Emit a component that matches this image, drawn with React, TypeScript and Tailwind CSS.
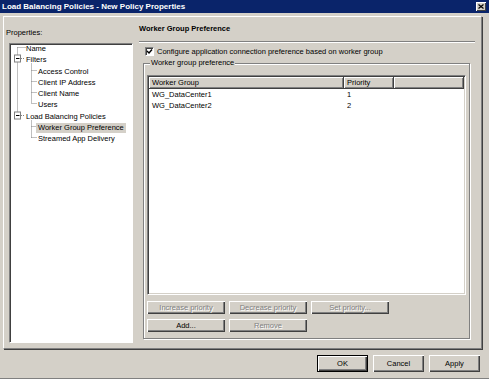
import React from "react";

const font = { fontFamily: '"Liberation Sans", Arial, sans-serif' };

function Btn({ label, disabled, w = "w-[78px]", h = "h-[13px]", def }: { label: string; disabled?: boolean; w?: string; h?: string; def?: boolean }) {
  return (
    <div
      className={`${w} ${h} flex items-center justify-center bg-[#d4d0c8] ${
        def
          ? "border border-[#000] shadow-[inset_1px_1px_0_#fff,inset_-1px_-1px_0_#404040,inset_-2px_-2px_0_#808080]"
          : "shadow-[inset_1px_1px_0_#fff,inset_-1px_-1px_0_#404040,inset_-2px_-2px_0_#808080]"
      } text-[7.5px] leading-none ${disabled ? "text-[#808080] [text-shadow:1px_1px_0_#fff]" : "text-black"}`}
    >
      {label}
    </div>
  );
}

function TreeLines() {
  const c = (k: number) => 3.5 + Math.round(11.25 * k);
  const dot = { stroke: "#808080", strokeWidth: 1, strokeDasharray: "1 1", fill: "none" } as const;
  const box = (k: number) => (
    <g key={"b" + k}>
      <rect x={4.5} y={c(k) - 3.5} width={6} height={7} fill="#fff" stroke="#808080" strokeWidth={1} />
      <line x1={6} y1={c(k)} x2={9.5} y2={c(k)} stroke="#000" strokeWidth={1} />
    </g>
  );
  return (
    <svg className="absolute left-0 top-0" width={120} height={120}>
      <line x1={7.5} y1={c(0)} x2={7.5} y2={c(6)} {...dot} />
      <line x1={7.5} y1={c(0)} x2={16} y2={c(0)} {...dot} />
      <line x1={11} y1={c(1)} x2={15} y2={c(1)} {...dot} />
      <line x1={11} y1={c(6)} x2={15} y2={c(6)} {...dot} />
      <line x1={21.5} y1={c(1) + 5} x2={21.5} y2={c(5)} {...dot} />
      {[2, 3, 4, 5].map((k) => (
        <line key={k} x1={21.5} y1={c(k)} x2={27} y2={c(k)} {...dot} />
      ))}
      <line x1={21.5} y1={c(6) + 5} x2={21.5} y2={c(8)} {...dot} />
      {[7, 8].map((k) => (
        <line key={"l" + k} x1={21.5} y1={c(k)} x2={27} y2={c(k)} {...dot} />
      ))}
      {box(1)}
      {box(6)}
    </svg>
  );
}

export default function App() {
  const tree: { t: string; lvl: number; sel?: boolean }[] = [
    { t: "Name", lvl: 0 },
    { t: "Filters", lvl: 0 },
    { t: "Access Control", lvl: 1 },
    { t: "Client IP Address", lvl: 1 },
    { t: "Client Name", lvl: 1 },
    { t: "Users", lvl: 1 },
    { t: "Load Balancing Policies", lvl: 0 },
    { t: "Worker Group Preference", lvl: 1, sel: true },
    { t: "Streamed App Delivery", lvl: 1 },
  ];
  return (
    <div style={font} className="w-[489px] h-[379px] bg-[#d4d0c8] flex flex-col border-b border-[#808080] overflow-hidden">
      {/* Title bar */}
      <div className="h-[13px] bg-[#0a246a] flex items-center justify-between pl-[2px] pr-[3px]">
        <span className="text-white font-bold text-[8px] leading-none">Load Balancing Policies - New Policy Properties</span>
        <div className="w-[10px] h-[9px] bg-[#d4d0c8] shadow-[inset_1px_1px_0_#fff,inset_-1px_-1px_0_#404040] flex items-center justify-center">
          <svg width="6" height="5" viewBox="0 0 6 5">
            <path d="M0.5 0.5 L5.5 4.5 M5.5 0.5 L0.5 4.5" stroke="#000" strokeWidth="1.2" />
          </svg>
        </div>
      </div>

      {/* Panel */}
      <div className="px-[3px] pt-[3px]">
        <div className="w-[479px] h-[333px] border-t border-l border-white border-r border-b border-r-[#808080] border-b-[#808080] shadow-[1px_1px_0_#404040] flex">
          {/* Left column */}
          <div className="w-[131px] flex flex-col">
            <div className="mt-[11px] pl-[2px] h-[10px] leading-[10px] text-[7.5px] text-[#000]">Properties:</div>
            <div className="mt-[5px] ml-[5px] w-[124px] h-[300px] bg-white border-t border-l border-[#808080] border-r border-b border-r-white border-b-white shadow-[inset_1px_1px_0_#404040] relative">
              <TreeLines />
              <div className="relative mt-[-0.5px] flex flex-col">
                {tree.map((r) => (
                  <div key={r.t} className={`h-[11.25px] flex items-center ${r.lvl === 0 ? "pl-[16px]" : "pl-[26px]"}`}>
                    <span
                      className={`text-[7.5px] leading-[10px] text-[#000] whitespace-nowrap ${r.lvl === 1 ? "px-[2px]" : ""} ${
                        r.sel ? "bg-[#d4d0c8]" : ""
                      }`}
                    >
                      {r.t}
                    </span>
                  </div>
                ))}
              </div>
            </div>
          </div>

          {/* Right column */}
          <div className="flex-1 pl-[4px] flex flex-col">
            <div className="mt-[7px] h-[10px] leading-[10px] font-bold text-[7.5px] text-[#000]">Worker Group Preference</div>
            <div className="mt-[7px] w-[336px] border-t border-[#808080] border-b border-b-white" />
            <div className="mt-[4px] ml-[6px] flex items-center gap-[3px] h-[9px]">
              <div className="w-[9px] h-[9px] bg-white border-t border-l border-[#808080] border-r border-b border-r-white border-b-white shadow-[inset_1px_1px_0_#404040] flex items-center justify-center">
                <svg width="7" height="7" viewBox="0 0 7 7">
                  <path d="M1 3 L3 5 L6 1.5" stroke="#000" strokeWidth="1.4" fill="none" />
                </svg>
              </div>
              <span className="text-[7.5px] leading-none text-[#000]">Configure application connection preference based on worker group</span>
            </div>

            {/* Group box */}
            <div className="mt-[7px] ml-[4px] w-[327px] h-[276px] border border-[#808080] shadow-[inset_1px_1px_0_#fff,1px_1px_0_#fff] relative pt-[11px] pl-[3px] flex flex-col">
              <span className="absolute left-[6px] top-[-6px] px-[1px] bg-[#d4d0c8] text-[7.5px] leading-[10px] text-[#000]">Worker group preference</span>
              <div className="w-[319px] h-[220px] bg-white border-t border-l border-[#808080] border-r border-b border-r-white border-b-white shadow-[inset_1px_1px_0_#404040,inset_-1px_-1px_0_#d4d0c8] p-[1px] flex flex-col">
                <div className="h-[12px] flex bg-[#d4d0c8] text-[7.5px] text-[#000]">
                  <div className="w-[195px] h-full flex items-center pl-[3px] border-r border-b border-[#404040] shadow-[inset_1px_1px_0_#fff,inset_-1px_-1px_0_#808080]">Worker Group</div>
                  <div className="w-[50px] h-full flex items-center pl-[3px] border-r border-b border-[#404040] shadow-[inset_1px_1px_0_#fff,inset_-1px_-1px_0_#808080]">Priority</div>
                  <div className="flex-1 h-full border-r border-b border-[#404040] shadow-[inset_1px_1px_0_#fff,inset_-1px_-1px_0_#808080]" />
                </div>
                {[
                  ["WG_DataCenter1", "1"],
                  ["WG_DataCenter2", "2"],
                ].map(([a, b]) => (
                  <div key={a} className="h-[11px] flex items-center text-[7.5px] text-[#000]">
                    <div className="w-[195px] pl-[3px]">{a}</div>
                    <div className="pl-[3px]">{b}</div>
                  </div>
                ))}
              </div>
              <div className="mt-[6px] flex gap-[4px]">
                <Btn label="Increase priority" disabled />
                <Btn label="Decrease priority" disabled />
                <Btn label="Set priority..." disabled />
              </div>
              <div className="mt-[5px] flex gap-[4px]">
                <Btn label="Add..." />
                <Btn label="Remove" disabled />
              </div>
            </div>
          </div>
        </div>
      </div>

      {/* Bottom buttons */}
      <div className="mt-[6px] flex justify-end gap-[5px] pr-[9px]">
        <Btn label="OK" w="w-[51px]" h="h-[17px]" def />
        <Btn label="Cancel" w="w-[51px]" h="h-[17px]" />
        <Btn label="Apply" w="w-[51px]" h="h-[17px]" />
      </div>
    </div>
  );
}
